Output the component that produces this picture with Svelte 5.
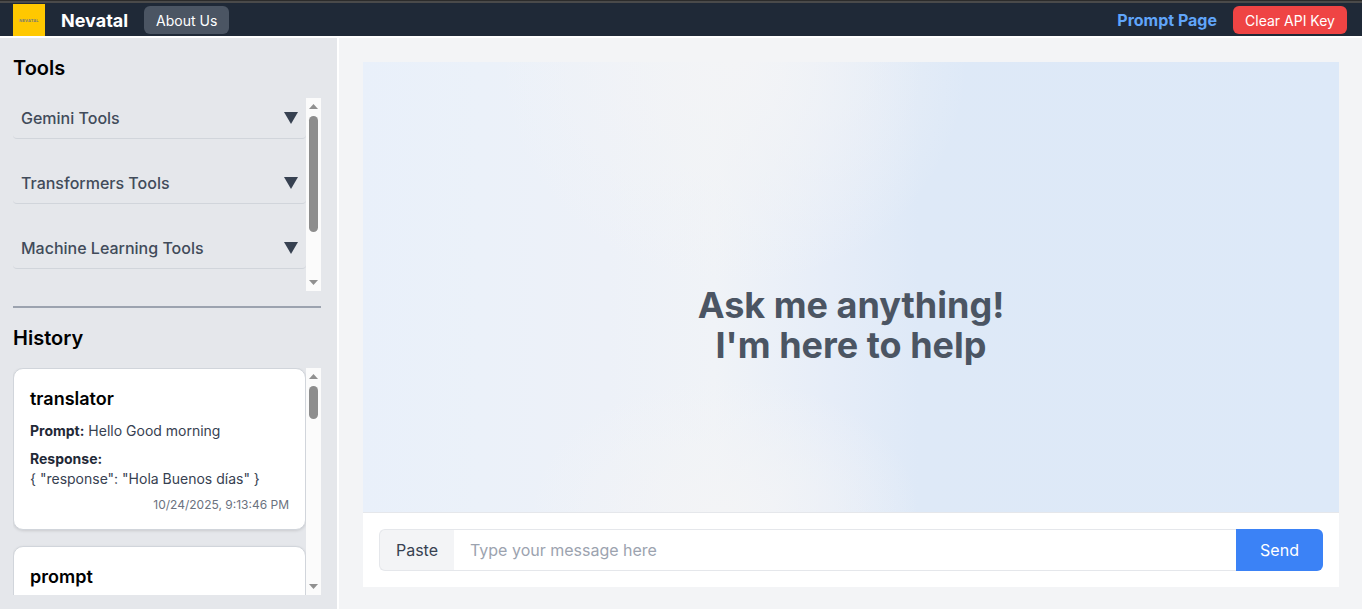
<script lang="ts">
    const tools: string[] = ["Gemini Tools", "Transformers Tools", "Machine Learning Tools"];

    let message: string = $state("");
</script>

{#snippet scrollbar(kind: string)}
    <div class="rail {kind}">
        <svg class="arrow" width="9" height="5" viewBox="0 0 9 5"><path d="M0 5H9L4.5 0Z" fill="#909090" /></svg>
        <div class="thumb"></div>
        <svg class="arrow down" width="9" height="5" viewBox="0 0 9 5"><path d="M0 0H9L4.5 5Z" fill="#909090" /></svg>
    </div>
{/snippet}

<div class="page">
    <div class="strip"></div>
    <header>
        <div class="brand">
            <div class="logo"><span>NEVATAL</span></div>
            <span class="name">Nevatal</span>
            <button class="about">About Us</button>
        </div>
        <div class="actions">
            <span class="prompt-link">Prompt Page</span>
            <button class="clear">Clear API Key</button>
        </div>
    </header>

    <div class="body">
        <aside>
            <h2>Tools</h2>
            <div class="pane tools-pane">
                <div class="list">
                    {#each tools as tool}
                        <div class="tool">
                            <span>{tool}</span>
                            <svg width="14" height="12" viewBox="0 0 14 12"><path d="M0 0H14L7 12Z" fill="#374151" /></svg>
                        </div>
                    {/each}
                </div>
                {@render scrollbar("tools-rail")}
            </div>
            <hr />
            <h2>History</h2>
            <div class="pane history-pane">
                <div class="list">
                    <div class="card">
                        <h3>translator</h3>
                        <p class="prompt"><b>Prompt:</b> Hello Good morning</p>
                        <p class="response"><b>Response:</b><br />{'{ "response": "Hola Buenos días" }'}</p>
                        <p class="time">10/24/2025, 9:13:46 PM</p>
                    </div>
                    <div class="card tall">
                        <h3>prompt</h3>
                    </div>
                </div>
                {@render scrollbar("history-rail")}
            </div>
        </aside>

        <main>
            <section class="chat">
                <div class="hero">
                    <h1>Ask me anything!<br />I'm here to help</h1>
                </div>
                <div class="composer">
                    <div class="group">
                        <button class="paste">Paste</button>
                        <input type="text" placeholder="Type your message here" bind:value={message} />
                        <button class="send">Send</button>
                    </div>
                </div>
            </section>
        </main>
    </div>
</div>

<style>
    :global(body) {
        margin: 0;
        overflow: hidden;
        font-family: Inter, "Liberation Sans", sans-serif;
    }

    .page {
        display: flex;
        flex-direction: column;
        height: 609px;
        background: #ffffff;
    }

    .strip {
        height: 4px;
        background: linear-gradient(#2b2b2b 0 1px, #4a4a4a 1px 3px, #1f2937 3px);
    }

    header {
        display: flex;
        justify-content: space-between;
        align-items: center;
        height: 32px;
        padding: 0 15px 0 13px;
        background: #1f2937;
    }

    .brand,
    .actions {
        display: flex;
        align-items: center;
    }

    .logo {
        display: flex;
        align-items: center;
        justify-content: center;
        width: 32px;
        height: 32px;
        background: #ffc800;
    }

    .logo span {
        font-size: 4px;
        font-weight: 600;
        color: #6b7280;
        letter-spacing: 0.2px;
    }

    .name {
        margin-left: 16px;
        font-size: 18px;
        font-weight: 700;
        color: #ffffff;
    }

    button {
        font-family: inherit;
        border: none;
        cursor: pointer;
    }

    .about {
        margin-left: 16px;
        width: 85px;
        height: 28px;
        padding: 0;
        border-radius: 6px;
        background: #4b5563;
        color: #ffffff;
        font-size: 14px;
    }

    .prompt-link {
        font-size: 16px;
        font-weight: 700;
        color: #60a5fa;
    }

    .clear {
        margin-left: 16px;
        width: 114px;
        height: 28px;
        padding: 0;
        border-radius: 6px;
        background: #ef4444;
        color: #ffffff;
        font-size: 14px;
    }

    .body {
        display: flex;
        flex: 1;
        min-height: 0;
        padding-top: 2px;
    }

    aside {
        display: flex;
        flex-direction: column;
        box-sizing: border-box;
        width: 337px;
        padding: 0 16px 14px 13px;
        background: #e5e7eb;
    }

    h2 {
        margin: 18px 0 18px;
        font-size: 20px;
        line-height: 24px;
        font-weight: 600;
        color: #000000;
    }

    .pane {
        display: flex;
        min-height: 0;
    }

    .tools-pane {
        flex: none;
        height: 193px;
    }

    .history-pane {
        flex: 1;
    }

    .list {
        flex: 1;
        min-width: 0;
        overflow: hidden;
    }

    /* hand drawn scrollbar, the native one does not show up in the shot */
    .rail {
        display: flex;
        flex-direction: column;
        align-items: center;
        flex: none;
        width: 15px;
        padding: 6px 0;
        box-sizing: border-box;
        background: #fbfbfb;
    }

    .arrow {
        flex: none;
        margin-bottom: 7px;
    }

    .arrow.down {
        margin: auto 0 0;
    }

    .thumb {
        flex: none;
        width: 9px;
        border-radius: 5px;
        background: #8d8d8d;
    }

    .tools-rail .thumb {
        height: 116px;
    }

    .history-rail .thumb {
        height: 33px;
    }

    .tool {
        display: flex;
        justify-content: space-between;
        align-items: center;
        box-sizing: border-box;
        height: 41px;
        margin-bottom: 24px;
        padding: 0 8px;
        border-bottom: 1px solid #d1d5db;
        border-radius: 0 0 4px 4px;
        font-size: 16px;
        font-weight: 500;
        color: #414b5a;
    }

    hr {
        flex: none;
        width: 100%;
        height: 2px;
        margin: 15px 0 0;
        border: none;
        background: #9ca3af;
    }

    .card {
        box-sizing: border-box;
        padding: 16px;
        margin-bottom: 16px;
        background: #ffffff;
        border: 1px solid #d1d5db;
        border-radius: 10px;
        box-shadow: 0 1px 3px rgba(0, 0, 0, 0.12);
        color: #374151;
        font-size: 14px;
        line-height: 20px;
    }

    .card.tall {
        height: 120px;
    }

    h3 {
        margin: 0 0 8px;
        font-size: 18px;
        line-height: 28px;
        font-weight: 600;
        color: #000000;
    }

    p {
        margin: 0;
    }

    .card b {
        font-weight: 700;
        color: #1f2937;
    }

    .prompt {
        margin-bottom: 8px;
    }

    .time {
        margin-top: 8px;
        text-align: right;
        font-size: 12px;
        line-height: 16px;
        color: #6b7280;
    }

    main {
        flex: 1;
        box-sizing: border-box;
        padding: 24px 23px 22px 24px;
        border-left: 2px solid #ffffff;
        background: #f3f4f6;
    }

    .chat {
        display: flex;
        flex-direction: column;
        height: 100%;
    }

    .hero {
        flex: 1;
        display: flex;
        align-items: center;
        justify-content: center;
        padding-top: 75px;
        box-sizing: border-box;
        min-height: 0;
        background:
            radial-gradient(ellipse 24% 50% at 38% 0%, #f3f4f6 0%, rgba(243, 244, 246, 0) 100%),
            radial-gradient(ellipse 20% 30% at 37% 100%, #f3f4f6 0%, rgba(243, 244, 246, 0) 100%),
            linear-gradient(90deg, #e9f0fa 0%, #ebf1f9 12%, #edf1f8 25%, #f0f3f7 36%, #e6edf8 48%, #dee9f7 57%, #dde9f8 100%);
    }

    h1 {
        margin: 0;
        text-align: center;
        font-size: 36px;
        line-height: 40px;
        font-weight: 700;
        color: #4b5563;
    }

    .composer {
        padding: 16px;
        border-top: 1px solid #e5e7eb;
        background: #ffffff;
    }

    .group {
        display: flex;
        height: 42px;
        box-sizing: border-box;
    }

    .paste {
        width: 75px;
        padding: 0;
        background: #f3f4f6;
        border: 1px solid #e5e7eb;
        border-right: none;
        border-radius: 6px 0 0 6px;
        color: #374151;
        font-size: 16px;
    }

    input {
        flex: 1;
        min-width: 0;
        padding: 0 16px;
        border: 1px solid #e5e7eb;
        border-width: 1px 0;
        outline: none;
        font-family: inherit;
        font-size: 16px;
        color: #374151;
    }

    input::placeholder {
        color: #9ca3af;
    }

    .send {
        width: 87px;
        padding: 0;
        background: #3b82f6;
        border-radius: 0 6px 6px 0;
        color: #ffffff;
        font-size: 16px;
    }
</style>
